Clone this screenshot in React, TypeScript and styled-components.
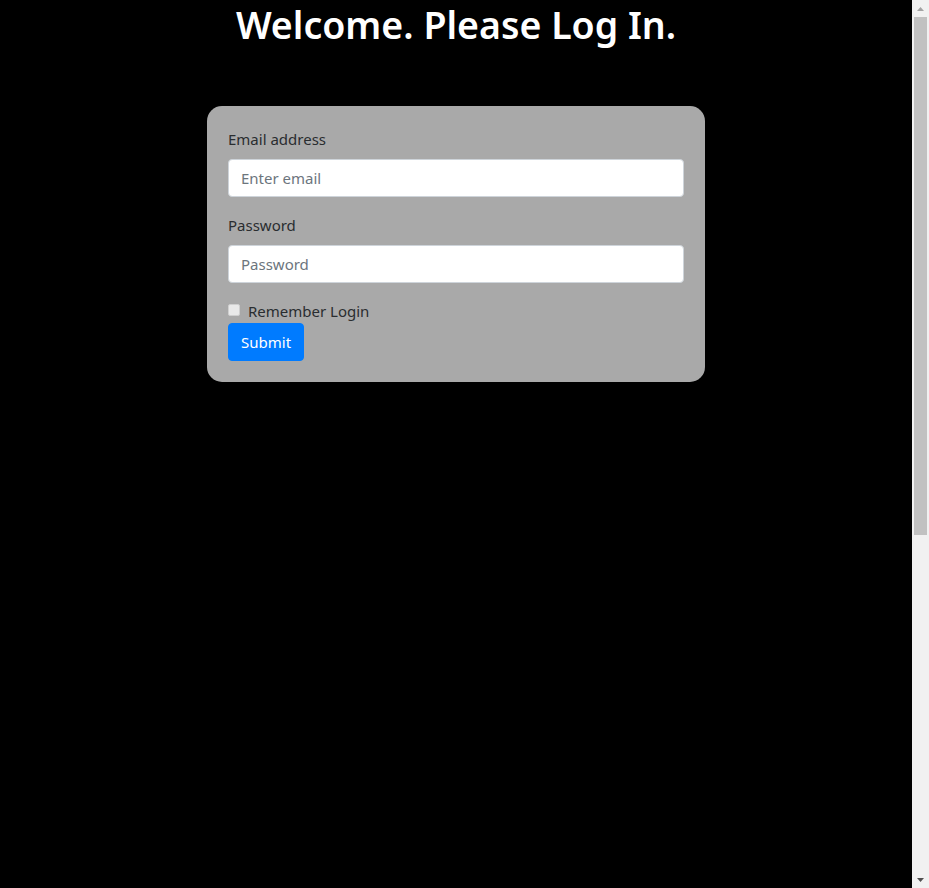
import React from "react";
import styled, { createGlobalStyle } from "styled-components";

const GlobalStyle = createGlobalStyle`
  html, body {
    margin: 0;
    padding: 0;
    background: #000;
  }
  body {
    font-family: "Noto Sans", "Open Sans", sans-serif;
    font-size: 15px;
    line-height: 1.5;
    color: #212529;
    overflow: hidden;
  }
  * { box-sizing: border-box; }
`;

const Page = styled.main`
  width: calc(100% - 17px);
  display: flex;
  flex-direction: column;
  align-items: center;
`;

const Title = styled.h1`
  margin: 0 0 58px;
  padding-top: 1px;
  font-size: 37.5px;
  line-height: 47px;
  font-weight: 600;
  color: #fff;
  text-align: center;
`;

const Card = styled.form`
  width: 498px;
  padding: 21px;
  background: #a9a9a9;
  border-radius: 15px;
  display: flex;
  flex-direction: column;
`;

const Group = styled.div`
  display: flex;
  flex-direction: column;
  margin-bottom: 16px;
`;

const Label = styled.label`
  display: block;
  margin-bottom: 8px;
  font-size: 15px;
  line-height: 24px;
  color: #2a2d30;
`;

const Input = styled.input`
  display: block;
  width: 100%;
  height: 38px;
  padding: 6px 12px;
  font-family: inherit;
  font-size: 15px;
  line-height: 24px;
  color: #495057;
  background: #fff;
  border: 1px solid #ced4da;
  border-radius: 4px;
  outline: none;
  &::placeholder {
    color: #6c757d;
  }
`;

const CheckRow = styled.label`
  display: flex;
  align-items: center;
  gap: 8px;
  font-size: 15px;
  line-height: 24px;
  color: #2a2d30;
`;

const Check = styled.input`
  appearance: none;
  margin: 0;
  width: 12px;
  height: 12px;
  background: #e9e9e9;
  border: 1px solid #cfcfcf;
  border-radius: 2px;
  position: relative;
  top: -1px;
`;

const Button = styled.button`
  align-self: flex-start;
  height: 38px;
  padding: 6px 12px;
  font-family: inherit;
  font-size: 15px;
  line-height: 24px;
  font-weight: 400;
  color: #fff;
  background: #007bff;
  border: 1px solid #007bff;
  border-radius: 4px;
  cursor: pointer;
`;

const Scrollbar = styled.aside`
  position: fixed;
  top: 0;
  right: 0;
  width: 17px;
  height: 100vh;
  background: #f1f1f1;
  display: flex;
  flex-direction: column;
`;

const ScrollButton = styled.div`
  flex: none;
  width: 17px;
  height: 17px;
  display: flex;
  align-items: center;
  justify-content: center;
`;

const Track = styled.div`
  flex: 1;
  display: flex;
  flex-direction: column;
  padding: 0 2px;
`;

const Thumb = styled.div`
  height: 518px;
  background: #c1c1c1;
`;

function Arrow({ down, color }: { down?: boolean; color: string }) {
  return (
    <svg width="7" height="4" viewBox="0 0 7 4">
      <path d={down ? "M0 0 H7 L3.5 4 Z" : "M0 4 H7 L3.5 0 Z"} fill={color} />
    </svg>
  );
}

export default function App() {
  return (
    <>
      <GlobalStyle />
      <Page>
        <Title>Welcome. Please Log In.</Title>
        <Card onSubmit={(e) => e.preventDefault()}>
          <Group>
            <Label htmlFor="email">Email address</Label>
            <Input id="email" type="email" placeholder="Enter email" />
          </Group>
          <Group>
            <Label htmlFor="password">Password</Label>
            <Input id="password" type="password" placeholder="Password" />
          </Group>
          <CheckRow>
            <Check type="checkbox" />
            Remember Login
          </CheckRow>
          <Button type="submit">Submit</Button>
        </Card>
      </Page>
      <Scrollbar aria-hidden="true">
        <ScrollButton>
          <Arrow color="#a3a3a3" />
        </ScrollButton>
        <Track>
          <Thumb />
        </Track>
        <ScrollButton>
          <Arrow down color="#505050" />
        </ScrollButton>
      </Scrollbar>
    </>
  );
}
